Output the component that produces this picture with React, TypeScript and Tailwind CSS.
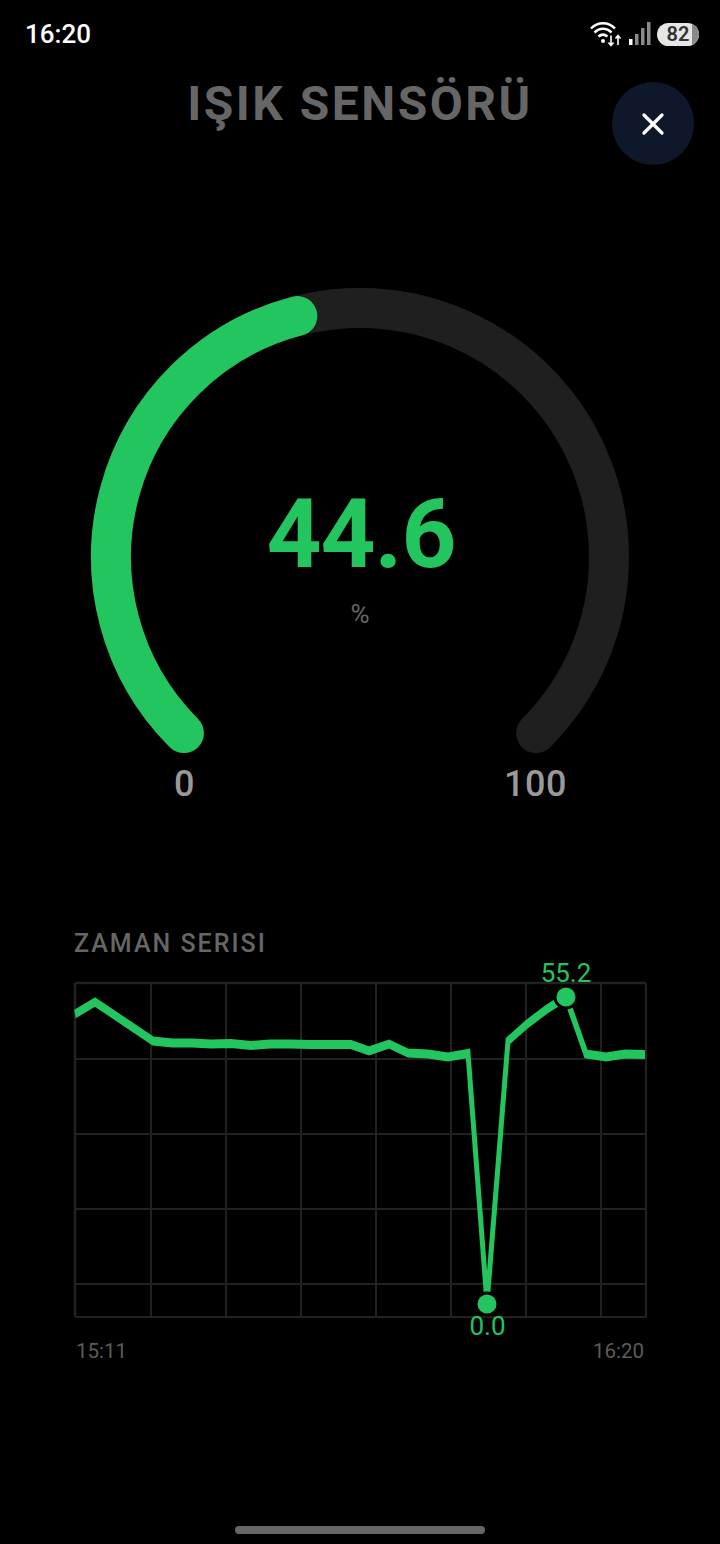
import { X } from "lucide-react";

const GREEN = "#22c55e";

// gauge geometry: 270deg sweep around (360, 269) inside a 720 wide svg
function polar(cx: number, cy: number, r: number, deg: number) {
  const a = (deg * Math.PI) / 180;
  return { x: cx + r * Math.cos(a), y: cy + r * Math.sin(a) };
}

function arc(cx: number, cy: number, r: number, from: number, to: number) {
  const s = polar(cx, cy, r, from);
  const e = polar(cx, cy, r, to);
  const large = to - from > 180 ? 1 : 0;
  return `M ${s.x} ${s.y} A ${r} ${r} 0 ${large} 1 ${e.x} ${e.y}`;
}

function Signal() {
  return (
    <svg width="22" height="24" viewBox="0 0 22 24" fill="none">
      <rect x="0" y="17" width="3.500" height="6" fill="#fff" />
      <rect x="6" y="12" width="3.500" height="11" fill="#8a8a8a" />
      <rect x="12" y="6" width="3.500" height="17" fill="#8a8a8a" />
      <rect x="18" y="0" width="3.500" height="23" fill="#8a8a8a" />
    </svg>
  );
}

function Wifi() {
  return (
    <svg width="33" height="26" viewBox="0 0 33 26" fill="none">
      <path d="M1 7.500C7.500 0.500 18.500 0.500 25 7.500" stroke="#fff" strokeWidth="2.500" />
      <path d="M4.500 11.500C9.500 6.500 16.500 6.500 21.500 11.500" stroke="#fff" strokeWidth="2.500" />
      <path d="M8.500 15.500C11.500 13 14.500 13 17.500 15.500" stroke="#fff" strokeWidth="2.500" />
      <circle cx="13" cy="20" r="2" fill="#fff" />
      <path d="M21 14.500V24M18.500 21.500L21 24.500L23.500 21.500" stroke="#fff" strokeWidth="1.600" />
      <path d="M28 24V14.500M25.500 17.500L28 14.500L30.500 17.500" stroke="#fff" strokeWidth="1.600" />
    </svg>
  );
}

function Battery() {
  return (
    <div className="relative flex h-[23px] w-[42px] items-center justify-center overflow-hidden rounded-full bg-[#e6e6e6]">
      <div className="absolute inset-y-0 right-0 w-[7px] bg-[#8a8a8a]" />
      <span className="relative text-[20px] font-semibold leading-none text-[#333]">82</span>
    </div>
  );
}

function Gauge() {
  const cx = 360;
  const cy = 269;
  const r = 249;
  const start = 135;
  const end = 405;
  const value = start + 0.446 * (end - start);
  return (
    <div className="relative h-[490px] w-full">
      <svg width="720" height="490" viewBox="0 0 720 490" fill="none" className="block">
        <path d={arc(cx, cy, r, start, end)} stroke="#1f1f1f" strokeWidth="40" strokeLinecap="round" />
        <path d={arc(cx, cy, r, start, value)} stroke={GREEN} strokeWidth="40" strokeLinecap="round" />
      </svg>
      <div className="absolute inset-x-0 top-[190px] flex flex-col items-center">
        <span className="pl-[2px] text-[96px] font-bold leading-[112px] tracking-[-1px] text-[#22c55e]">44.6</span>
        <span className="mt-[9px] text-[26px] leading-[30px] text-[#666]">%</span>
      </div>
    </div>
  );
}

const points: [number, number][] = [
  [1, 31], [21, 19], [79, 58], [98, 60], [118, 60], [137, 61], [157, 60.5], [177, 62.5],
  [196, 61], [216, 61], [236, 61.5], [256, 61.5], [277, 61.5], [295, 68], [315, 61],
  [334, 70], [354, 71], [374, 74], [394, 70.5], [413, 320], [434, 58], [453, 41],
  [473, 26], [492, 14], [512, 71], [532, 74], [551, 71], [571, 71.5],
];

const gridX = [1, 77, 152, 227, 302, 377, 452, 527, 572];
const gridY = [0, 76, 151, 226, 301, 334];

const STRETCH = 1.8;

function Chart() {
  const line = points.map(([x, y]) => `${x},${y / STRETCH}`).join(" ");
  return (
    <svg width="574" height="362" viewBox="0 0 574 362" fill="none" className="mt-[25px] block overflow-visible">
      {gridX.map((x) => (
        <line key={x} x1={x} y1="0" x2={x} y2="334" stroke="#222" strokeWidth={x === 1 ? 2.5 : 2} />
      ))}
      {gridY.map((y) => (
        <line key={y} x1="1" y1={y} x2="572" y2={y} stroke="#222" strokeWidth={y === 0 ? 2.5 : 2} />
      ))}
      <g transform={`scale(1 ${STRETCH})`}>
        <polyline points={line} stroke={GREEN} strokeWidth="5" strokeLinejoin="miter" />
      </g>
      <circle cx="492" cy="14" r="9.500" fill={GREEN} stroke="#000" strokeWidth="6" paintOrder="stroke" />
      <circle cx="413" cy="321" r="9.500" fill={GREEN} stroke="#000" strokeWidth="6" paintOrder="stroke" />
      <text x="492" y="-1" textAnchor="middle" fill={GREEN} fontSize="26">55.2</text>
      <text x="413.500" y="352" textAnchor="middle" fill={GREEN} fontSize="26">0.0</text>
    </svg>
  );
}

export default function App() {
  return (
    <div className="relative flex h-[1544px] w-[720px] flex-col overflow-hidden bg-black font-['Roboto',sans-serif]">
      <div className="flex h-[68px] items-center justify-between pl-[25px] pr-[21px]">
        <span className="text-[26px] font-medium leading-none text-white">16:20</span>
        <div className="flex items-center gap-[6px]">
          <Wifi />
          <Signal />
          <Battery />
        </div>
      </div>

      <h1 className="mt-[8px] text-center text-[48px] font-bold leading-[56px] tracking-[2.5px] text-[#666]">
        IŞIK SENSÖRÜ
      </h1>

      <button className="absolute left-[612px] top-[82px] flex h-[83px] w-[82px] items-center justify-center rounded-full bg-[#0f172a] text-white">
        <X size={36} strokeWidth={2.2} />
      </button>

      <div className="mt-[156px]">
        <Gauge />
      </div>

      <div className="-mt-[15px] flex justify-between pl-[174px] pr-[153px]">
        <span className="text-[36px] font-medium leading-[42px] tracking-[0.5px] text-[#999]">0</span>
        <span className="text-[36px] font-medium leading-[42px] tracking-[0.5px] text-[#999]">100</span>
      </div>

      <div className="mt-[125px] px-[74px]">
        <h2 className="text-[25px] font-medium leading-[28px] tracking-[2px] text-[#666]">ZAMAN SERISI</h2>
        <Chart />
        <div className="-mt-[6px] flex justify-between pl-[2px] pr-[2px] text-[20.5px] leading-[24px] text-[#5c5c5c]">
          <span>15:11</span>
          <span>16:20</span>
        </div>
      </div>

      <div className="mt-auto mb-[10px] h-[8px] w-[250px] self-center rounded-full bg-[#666]" />
    </div>
  );
}
